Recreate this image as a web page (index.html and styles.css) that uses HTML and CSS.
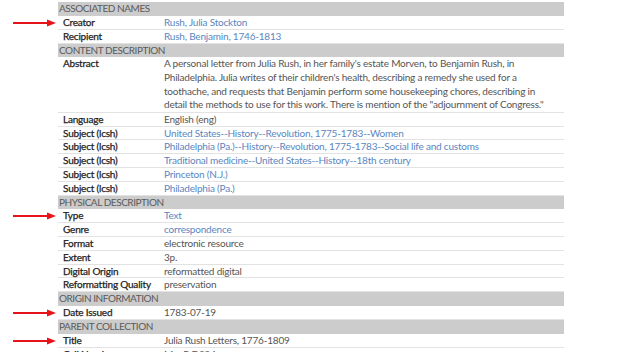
FILE: index.html
```html
<!DOCTYPE html>
<html>
<head>
<meta charset="utf-8">
<link rel="stylesheet" href="styles.css">
</head>
<body>
<div class="page">
  <div class="row"><div class="gutter"></div><div class="sec">Associated Names</div></div>
  <div class="row"><div class="gutter"><svg class="arrow" width="44" height="8" viewBox="0 0 44 8"><line x1="0" y1="4" x2="36" y2="4" stroke="#e8141b" stroke-width="2"/><path d="M34 0.5 L43 4 L34 7.5 Z" fill="#e8141b"/></svg></div><div class="cells"><div class="lab">Creator</div><div class="val"><a>Rush, Julia Stockton</a></div></div></div>
  <div class="row"><div class="gutter"></div><div class="cells"><div class="lab">Recipient</div><div class="val"><a>Rush, Benjamin, 1746-1813</a></div></div></div>
  <div class="row"><div class="gutter"></div><div class="sec">Content Description</div></div>
  <div class="row"><div class="gutter"></div><div class="cells"><div class="lab">Abstract</div><div class="val abs">A personal letter from Julia Rush, in her family's estate Morven, to Benjamin Rush, in<br>Philadelphia. Julia writes of their children's health, describing a remedy she used for a<br>toothache, and requests that Benjamin perform some housekeeping chores, describing in<br>detail the methods to use for this work. There is mention of the "adjournment of Congress."</div></div></div>
  <div class="row"><div class="gutter"></div><div class="cells"><div class="lab">Language</div><div class="val">English (eng)</div></div></div>
  <div class="row"><div class="gutter"></div><div class="cells"><div class="lab">Subject (lcsh)</div><div class="val"><a>United States--History--Revolution, 1775-1783--Women</a></div></div></div>
  <div class="row"><div class="gutter"></div><div class="cells"><div class="lab">Subject (lcsh)</div><div class="val"><a>Philadelphia (Pa.)--History--Revolution, 1775-1783--Social life and customs</a></div></div></div>
  <div class="row"><div class="gutter"></div><div class="cells"><div class="lab">Subject (lcsh)</div><div class="val"><a>Traditional medicine--United States--History--18th century</a></div></div></div>
  <div class="row"><div class="gutter"></div><div class="cells"><div class="lab">Subject (lcsh)</div><div class="val"><a>Princeton (N.J.)</a></div></div></div>
  <div class="row"><div class="gutter"></div><div class="cells"><div class="lab">Subject (lcsh)</div><div class="val"><a>Philadelphia (Pa.)</a></div></div></div>
  <div class="row"><div class="gutter"></div><div class="sec">Physical Description</div></div>
  <div class="row"><div class="gutter"><svg class="arrow" width="44" height="8" viewBox="0 0 44 8"><line x1="0" y1="4" x2="36" y2="4" stroke="#e8141b" stroke-width="2"/><path d="M34 0.5 L43 4 L34 7.5 Z" fill="#e8141b"/></svg></div><div class="cells"><div class="lab">Type</div><div class="val"><a>Text</a></div></div></div>
  <div class="row"><div class="gutter"></div><div class="cells"><div class="lab">Genre</div><div class="val"><a>correspondence</a></div></div></div>
  <div class="row"><div class="gutter"></div><div class="cells"><div class="lab">Format</div><div class="val">electronic resource</div></div></div>
  <div class="row"><div class="gutter"></div><div class="cells"><div class="lab">Extent</div><div class="val">3p.</div></div></div>
  <div class="row"><div class="gutter"></div><div class="cells"><div class="lab">Digital Origin</div><div class="val">reformatted digital</div></div></div>
  <div class="row"><div class="gutter"></div><div class="cells"><div class="lab">Reformatting Quality</div><div class="val">preservation</div></div></div>
  <div class="row"><div class="gutter"></div><div class="sec">Origin Information</div></div>
  <div class="row"><div class="gutter"><svg class="arrow" width="44" height="8" viewBox="0 0 44 8"><line x1="0" y1="4" x2="36" y2="4" stroke="#e8141b" stroke-width="2"/><path d="M34 0.5 L43 4 L34 7.5 Z" fill="#e8141b"/></svg></div><div class="cells"><div class="lab">Date Issued</div><div class="val">1783-07-19</div></div></div>
  <div class="row"><div class="gutter"></div><div class="sec">Parent Collection</div></div>
  <div class="row"><div class="gutter"><svg class="arrow" width="44" height="8" viewBox="0 0 44 8"><line x1="0" y1="4" x2="36" y2="4" stroke="#e8141b" stroke-width="2"/><path d="M34 0.5 L43 4 L34 7.5 Z" fill="#e8141b"/></svg></div><div class="cells"><div class="lab">Title</div><div class="val">Julia Rush Letters, 1776-1809</div></div></div>
  <div class="row"><div class="gutter"></div><div class="cells"><div class="lab">Call Number</div><div class="val">Mss.R.D894</div></div></div>
</div>
</body>
</html>
```
FILE: styles.css
```css
html, body {
  margin: 0;
  padding: 0;
  background: #fff;
}
body {
  font-family: "Lato", "Liberation Sans", sans-serif;
  font-size: 10px;
  letter-spacing: -0.2px;
  color: #555;
  overflow: hidden;
}
.page {
  padding-top: 2px;
  width: 564px;
}
.row {
  display: flex;
}
.gutter {
  width: 58px;
  flex: none;
  display: flex;
  align-items: center;
  justify-content: flex-start;
}
.arrow {
  margin-left: 13px;
  display: block;
}
.sec {
  width: 505px;
  padding-left: 1px;
  background: #cccccc;
  color: #5a5a5a;
  text-transform: uppercase;
  line-height: 13.9px;
  font-size: 10px;
  letter-spacing: -0.45px;
}
.cells {
  display: grid;
  grid-template-columns: 106px 400px;
  border-bottom: 1px solid #e2e2e2;
  line-height: 12.8px;
}
.lab {
  padding-left: 5px;
  color: #222;
  font-weight: 400;
  -webkit-text-stroke: 0.25px #222;
}
.val {
  color: #555;
  white-space: nowrap;
}
.abs {
  line-height: 13.6px;
}
.val a {
  color: #5a86c0;
  text-decoration: none;
}
```
